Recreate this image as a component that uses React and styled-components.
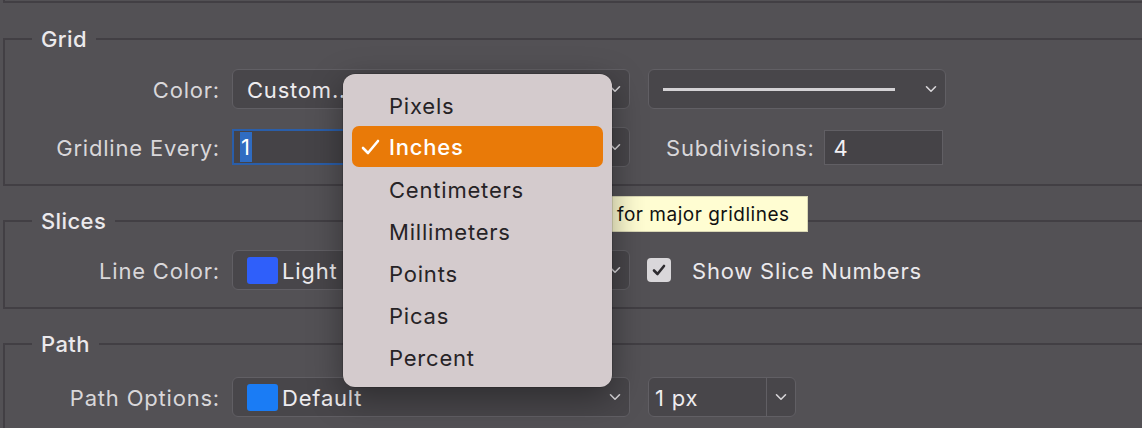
import React from "react";
import styled, { createGlobalStyle } from "styled-components";

const Global = createGlobalStyle`
  html, body { margin: 0; padding: 0; }
  body {
    background: #535155;
    font-family: Inter, "Noto Sans", "Liberation Sans", sans-serif;
    overflow: hidden;
    width: 1142px;
    height: 428px;
  }
`;

const Page = styled.div`
  position: relative;
  width: 1142px;
  height: 428px;
  overflow: hidden;
  padding-left: 3px;
  box-sizing: border-box;
  font-size: 22px;
  letter-spacing: 0.8px;
`;

const Column = styled.div`
  display: flex;
  flex-direction: column;
  width: 1200px;
`;

const PrevGroup = styled.div`
  height: 1px;
  border-left: 2px solid #423f44;
  border-bottom: 2px solid #423f44;
  margin-bottom: ${(p) => p.$gap}px;
`;

const Group = styled.fieldset`
  margin: 0 0 ${(p) => p.$after || 0}px 0;
  padding: ${(p) => p.$pt}px 0 ${(p) => p.$pb}px 0;
  border: 2px solid #423f44;
  border-right: none;
  min-width: 0;
  display: flex;
  flex-direction: column;
  gap: 18px;
`;

const Legend = styled.legend`
  margin-left: 27px;
  padding: 0 9px;
  font-size: 22px;
  line-height: 24px;
  color: #ebe9ec;
  font-weight: 500;
  letter-spacing: 0.4px;
`;

const Row = styled.div`
  display: flex;
  align-items: center;
  height: 40px;
`;

const Label = styled.div`
  width: 215px;
  text-align: right;
  color: #d9d7da;
  margin-right: 12px;
  padding-top: 1px;
  flex: none;
  white-space: nowrap;
`;

const SelectBox = styled.div`
  position: relative;
  box-sizing: border-box;
  width: ${(p) => p.$w}px;
  height: 40px;
  margin-left: ${(p) => p.$ml || 0}px;
  border: 1.5px solid #615f64;
  border-radius: 6px;
  background: #48464a;
  display: flex;
  align-items: center;
  padding-left: 14px;
  padding-right: 36px;
  padding-top: 1px;
  color: #eeecef;
  flex: none;
  white-space: nowrap;
  overflow: hidden;
`;

const Chevron = styled.svg`
  position: absolute;
  right: 8px;
  top: 50%;
  transform: translateY(-50%);
  width: 12px;
  height: 8px;
`;

const Swatch = styled.span`
  width: 31px;
  height: 27px;
  border-radius: 3px;
  background: ${(p) => p.$c};
  margin-right: 4px;
  flex: none;
`;

const LineStyle = styled.span`
  display: block;
  width: 232px;
  height: 3px;
  background: #d4d2d5;
`;

const FocusInput = styled.div`
  box-sizing: border-box;
  width: 170px;
  height: 36px;
  border: 2px solid #2a5ea9;
  background: #454347;
  display: flex;
  align-items: center;
  padding-left: 6px;
  color: #fff;
  flex: none;
`;

const Selected = styled.span`
  background: #2f6cc2;
  padding: 1px 1px 0;
  line-height: 29px;
`;

const FieldLabel = styled.span`
  color: #d9d7da;
  margin-left: ${(p) => p.$ml}px;
  margin-right: 9px;
  padding-top: 1px;
  white-space: nowrap;
`;

const TextField = styled.div`
  box-sizing: border-box;
  width: 119px;
  height: 35px;
  border: 1.5px solid #615f64;
  background: #454347;
  display: flex;
  align-items: center;
  padding-left: 9px;
  padding-top: 1px;
  color: #f2f0f3;
  flex: none;
`;

const CheckBox = styled.span`
  width: 24px;
  height: 24px;
  border-radius: 4px;
  background: #d9d7da;
  margin-left: 17px;
  display: flex;
  align-items: center;
  justify-content: center;
  flex: none;
`;

const CheckText = styled.span`
  color: #ebe9ec;
  margin-left: 21px;
  padding-top: 1px;
  white-space: nowrap;
`;

const Combo = styled.div`
  box-sizing: border-box;
  width: 148px;
  height: 40px;
  margin-left: 18px;
  border: 1.5px solid #615f64;
  border-radius: 6px;
  background: #48464a;
  display: flex;
  color: #eeecef;
  flex: none;
`;

const ComboText = styled.div`
  flex: 1;
  display: flex;
  align-items: center;
  padding-left: 6px;
  padding-top: 1px;
  border-right: 1.5px solid #615f64;
`;

const ComboBtn = styled.div`
  position: relative;
  width: 28px;
`;

const Menu = styled.div`
  position: absolute;
  left: 343px;
  top: 74px;
  width: 269px;
  box-sizing: border-box;
  padding: 10px 9px 9px;
  border-radius: 12px;
  background: #d4cbcd;
  box-shadow: 0 10px 34px rgba(0, 0, 0, 0.38), 0 0 0 0.5px rgba(0, 0, 0, 0.25);
  z-index: 3;
`;

const Item = styled.div`
  position: relative;
  display: flex;
  align-items: center;
  padding-left: 37px;
  padding-top: 1px;
  box-sizing: border-box;
  border-radius: 7px;
  color: ${(p) => (p.$active ? "#ffffff" : "#262326")};
  font-weight: ${(p) => (p.$active ? 500 : 400)};
  background: ${(p) => (p.$active ? "#e97a08" : "transparent")};
  height: ${(p) => (p.$active ? "41px" : "42px")};
  margin-bottom: ${(p) => (p.$active ? "1px" : "0")};
`;

const Check = styled.svg`
  position: absolute;
  left: 9px;
  top: 50%;
  transform: translateY(-50%);
  width: 19px;
  height: 17px;
`;

const Tooltip = styled.div`
  position: absolute;
  left: 590px;
  top: 196px;
  width: 218px;
  height: 36px;
  box-sizing: border-box;
  padding-left: 26px;
  background: #fffdd2;
  border: 1px solid #d9d7b4;
  display: flex;
  align-items: center;
  font-size: 19px;
  letter-spacing: 0.5px;
  color: #111;
  z-index: 2;
  white-space: nowrap;
`;

const Chev = () => (
  <Chevron viewBox="0 0 12 8">
    <path d="M1.5 1.8 L6 6.2 L10.5 1.8" fill="none" stroke="#d8d6d9" strokeWidth="1.6" strokeLinecap="round" strokeLinejoin="round" />
  </Chevron>
);

const units = ["Pixels", "Inches", "Centimeters", "Millimeters", "Points", "Picas", "Percent"];

export default function App() {
  return (
    <>
      <Global />
      <Page>
        <Column>
          <PrevGroup $gap={24} />
          <Group $pt={18} $pb={17} $after={23}>
            <Legend>Grid</Legend>
            <Row>
              <Label>Color:</Label>
              <SelectBox $w={398}>
                Custom...
                <Chev />
              </SelectBox>
              <SelectBox $w={298} $ml={18}>
                <LineStyle />
                <Chev />
              </SelectBox>
            </Row>
            <Row>
              <Label>Gridline Every:</Label>
              <FocusInput>
                <Selected>1</Selected>
              </FocusInput>
              <SelectBox $w={220} $ml={8}>
                <Chev />
              </SelectBox>
              <FieldLabel $ml={36}>Subdivisions:</FieldLabel>
              <TextField>4</TextField>
            </Row>
          </Group>
          <Group $pt={17} $pb={17} $after={23}>
            <Legend>Slices</Legend>
            <Row>
              <Label>Line Color:</Label>
              <SelectBox $w={398}>
                <Swatch $c="#2f5ffa" />
                Light Blue
                <Chev />
              </SelectBox>
              <CheckBox>
                <svg width="14" height="12" viewBox="0 0 14 12">
                  <path d="M2 6.5 L5.5 10 L12 2" fill="none" stroke="#2e2c30" strokeWidth="2.6" strokeLinecap="round" strokeLinejoin="round" />
                </svg>
              </CheckBox>
              <CheckText>Show Slice Numbers</CheckText>
            </Row>
          </Group>
          <Group $pt={21} $pb={18}>
            <Legend>Path</Legend>
            <Row>
              <Label>Path Options:</Label>
              <SelectBox $w={398}>
                <Swatch $c="#1a7cf5" />
                Default
                <Chev />
              </SelectBox>
              <Combo>
                <ComboText>1 px</ComboText>
                <ComboBtn>
                  <Chev />
                </ComboBtn>
              </Combo>
            </Row>
          </Group>
        </Column>
        <Tooltip>for major gridlines</Tooltip>
        <Menu>
          {units.map((u) => (
            <Item key={u} $active={u === "Inches"}>
              {u === "Inches" && (
                <Check viewBox="0 0 19 17">
                  <path d="M2 9.5 L7 14.5 L17 2.5" fill="none" stroke="#fff" strokeWidth="2.6" strokeLinecap="round" strokeLinejoin="round" />
                </Check>
              )}
              {u}
            </Item>
          ))}
        </Menu>
      </Page>
    </>
  );
}
